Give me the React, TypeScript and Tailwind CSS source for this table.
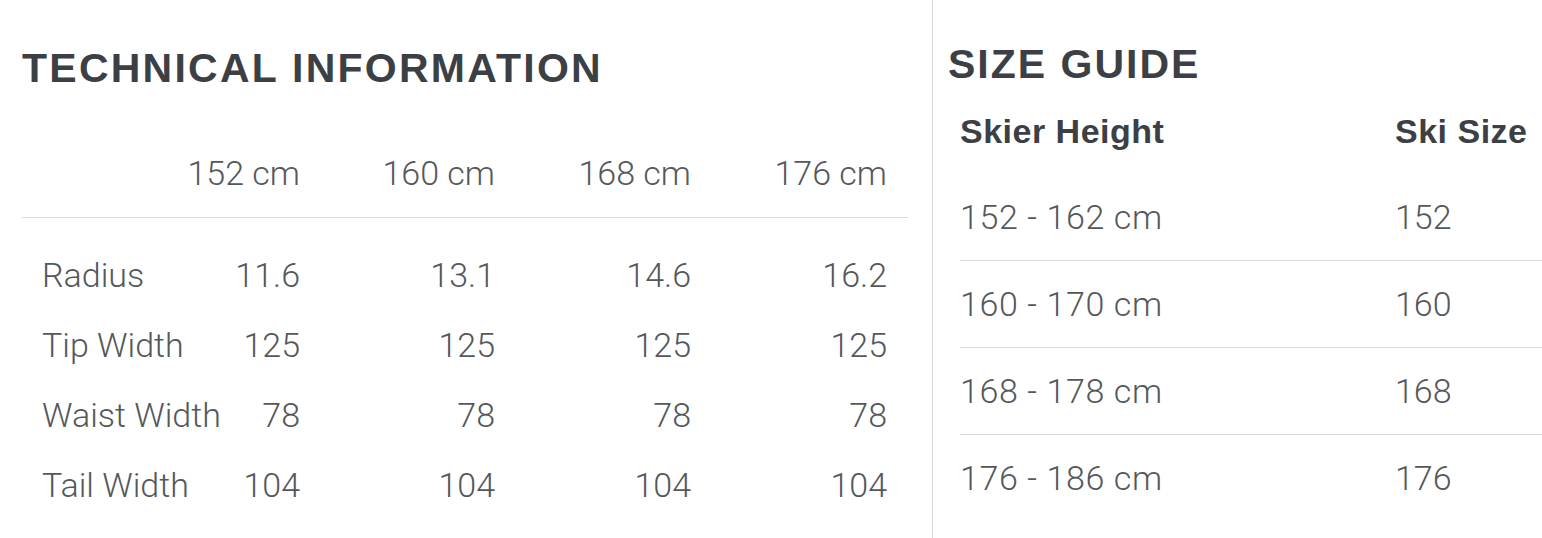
import React from "react";

const sizes = ["152 cm", "160 cm", "168 cm", "176 cm"];

const specs = [
  { label: "Radius", values: ["11.6", "13.1", "14.6", "16.2"] },
  { label: "Tip Width", values: ["125", "125", "125", "125"] },
  { label: "Waist Width", values: ["78", "78", "78", "78"] },
  { label: "Tail Width", values: ["104", "104", "104", "104"] },
];

const guide = [
  { height: "152 - 162 cm", size: "152" },
  { height: "160 - 170 cm", size: "160" },
  { height: "168 - 178 cm", size: "168" },
  { height: "176 - 186 cm", size: "176" },
];

const heading = "font-['Liberation_Sans',Arial,sans-serif] font-bold text-[41px] leading-[48px] text-[#3c4044] uppercase";
const light = "font-['Roboto','Liberation_Sans',sans-serif] font-light text-[34px] leading-[40px] text-[#55585b] whitespace-nowrap";
const cols = "grid grid-cols-[120px_138px_195px_196px_196px]";

export default function App() {
  return (
    <div className="flex h-[538px] w-[1542px] overflow-hidden bg-white">
      {/* Technical information */}
      <div className="h-full w-[933px] shrink-0 border-r border-[#d9d9d9] pl-[22px]">
        <h2 className={`${heading} pt-[44px] tracking-[2.25px]`}>Technical Information</h2>

        <div className={`${cols} mt-[61px] w-[886px] border-b border-[#dcdcdc] pb-[24px] pl-[20px]`}>
          <span />
          {sizes.map((s) => (
            <span key={s} className={`${light} text-right`}>
              {s}
            </span>
          ))}
        </div>

        <div className="mt-[37px] flex flex-col gap-[30px] pl-[20px]">
          {specs.map((row) => (
            <div key={row.label} className={cols}>
              <span className={light}>{row.label}</span>
              {row.values.map((v, i) => (
                <span key={i} className={`${light} text-right`}>
                  {v}
                </span>
              ))}
            </div>
          ))}
        </div>
      </div>

      {/* Size guide */}
      <div className="h-full flex-1 pl-[15px]">
        <h2 className={`${heading} pt-[40px] tracking-[2px]`}>Size Guide</h2>

        <div className="mt-[23px] grid grid-cols-[435px_1fr] pl-[12px] font-['Liberation_Sans',Arial,sans-serif] text-[34px] font-bold leading-[40px] tracking-[0.5px] text-[#3c4044]">
          <span>Skier Height</span>
          <span>Ski Size</span>
        </div>

        <div className="mt-[23px] ml-[12px] flex flex-col">
          {guide.map((g, i) => (
            <div
              key={g.size}
              className={`grid h-[87px] grid-cols-[435px_1fr] pt-[23px] ${
                i < guide.length - 1 ? "border-b border-[#d9d9d9]" : ""
              }`}
            >
              <span className={`${light} tracking-[0.6px]`}>{g.height}</span>
              <span className={light}>{g.size}</span>
            </div>
          ))}
        </div>
      </div>
    </div>
  );
}
